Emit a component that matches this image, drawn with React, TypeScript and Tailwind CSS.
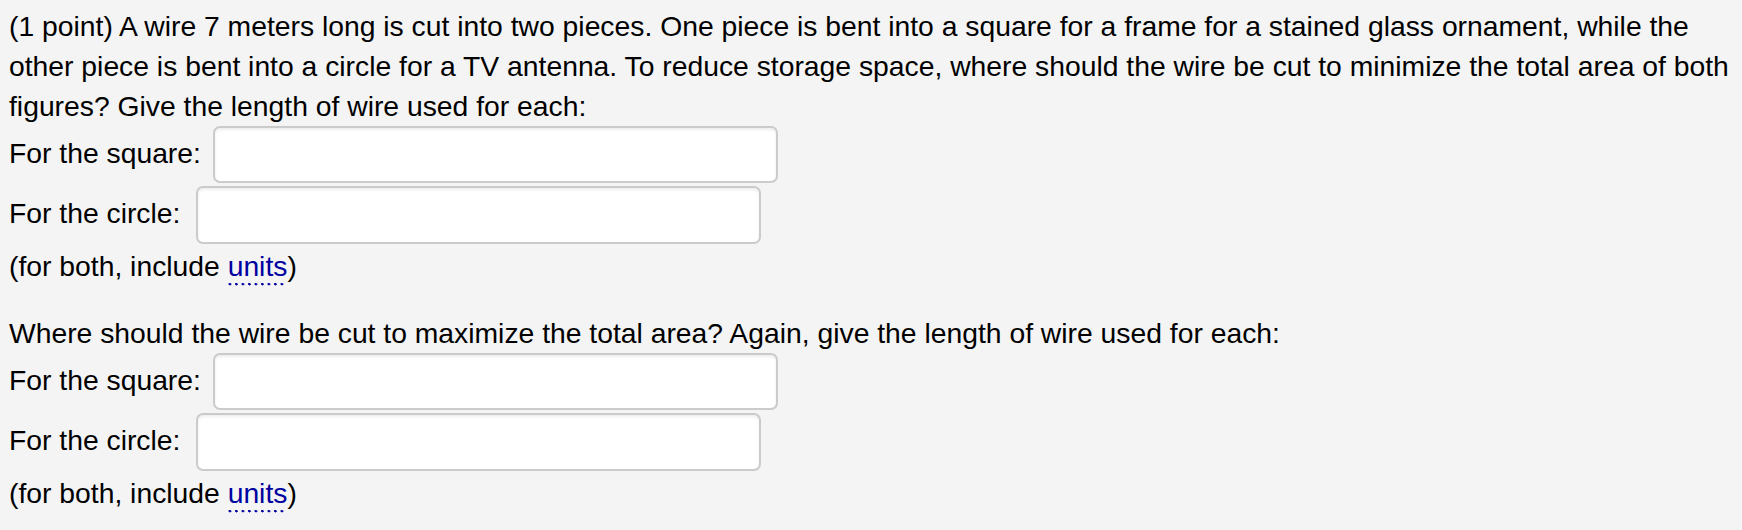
import type { FC } from "react";

const Units: FC = () => (
  <span className="text-[#0000a0] pb-[4px] bg-[radial-gradient(circle_at_1.2px_1.2px,#0000a0_1.1px,transparent_1.5px)] bg-[length:6.5px_3px] bg-repeat-x bg-bottom">
    units
  </span>
);

const AnswerRow: FC<{ label: string; gap: string; height: string }> = ({
  label,
  gap,
  height,
}) => (
  <div className={`flex items-start ${height}`}>
    <span className="mt-[7px] whitespace-nowrap">{label}</span>
    <input
      type="text"
      className={`${gap} w-[565px] h-full bg-white border-2 border-[#cbcbcb] rounded-[7px] shadow-[inset_0_2px_3px_rgba(0,0,0,0.07)] outline-none`}
    />
  </div>
);

const Block: FC = () => (
  <>
    <AnswerRow label="For the square:" gap="ml-[12px]" height="h-[57px]" />
    <div className="h-[3px]" />
    <AnswerRow label="For the circle:" gap="ml-[16px]" height="h-[58px]" />
    <p className="mt-[2px]">
      (for both, include <Units />)
    </p>
  </>
);

export default function App() {
  return (
    <div className="min-h-screen bg-[#f4f4f4] px-[9px] pt-[6px] text-[28.3px] leading-[40px] text-black font-['Liberation_Sans',Helvetica,Arial,sans-serif]">
      {/* Part 1: minimize */}
      <p>
        (1 point) A wire 7 meters long is cut into two pieces. One piece is bent
        into a square for a frame for a stained glass ornament, while the other
        piece is bent into a circle for a TV antenna. To reduce storage space,
        where should the wire be cut to minimize the total area of both figures?
        Give the length of wire used for each:
      </p>
      <Block />

      {/* Part 2: maximize */}
      <p className="mt-[27px]">
        Where should the wire be cut to maximize the total area? Again, give the
        length of wire used for each:
      </p>
      <Block />
    </div>
  );
}
